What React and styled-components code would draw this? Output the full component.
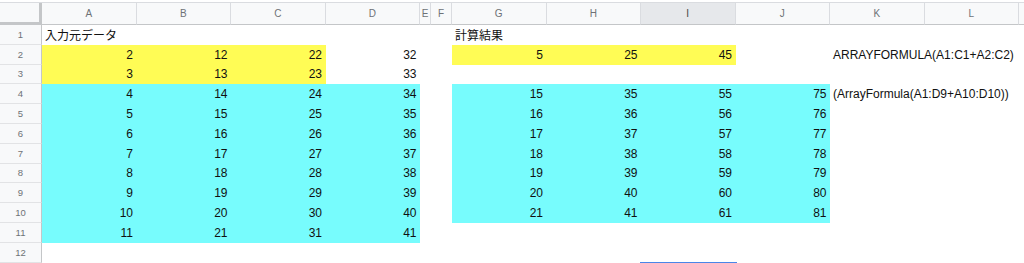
import React from 'react';
import styled, { createGlobalStyle } from 'styled-components';

const GlobalStyle = createGlobalStyle`
  html, body {
    margin: 0;
    padding: 0;
    background: #ffffff;
  }
`;

const Page = styled.div`
  width: 1024px;
  height: 263px;
  overflow: hidden;
  padding-top: 2px;
  box-sizing: border-box;
  font-family: "Liberation Sans", Arial, "Noto Sans CJK JP", sans-serif;
`;

const Sheet = styled.div`
  display: grid;
  grid-template-columns: 42px repeat(4, 94.5px) 11px 21px repeat(6, 94.5px) 1fr;
  grid-template-rows: 22px repeat(13, 19.8px);
  border-top: 1px solid #dadce0;
`;

const Corner = styled.div`
  background: #f8f9fa;
  border-right: 3px solid #c4c6c8;
  border-bottom: 3px solid #c4c6c8;
  box-sizing: border-box;
`;

const ColHeader = styled.div`
  display: flex;
  align-items: center;
  justify-content: center;
  background: ${(p) => (p.$active ? '#e6e8eb' : '#f8f9fa')};
  color: ${(p) => (p.$active ? '#444' : '#6e7276')};
  font-size: 10px;
  border-right: 1px solid #dadce0;
  border-bottom: 1px solid #c4c6c8;
  box-sizing: border-box;
`;

const RowHeader = styled.div`
  display: flex;
  align-items: center;
  justify-content: center;
  background: #f8f9fa;
  color: #6e7276;
  font-size: 9.5px;
  border-right: 1px solid #c4c6c8;
  border-bottom: 1px solid #e2e3e5;
  box-sizing: border-box;
`;

const Cell = styled.div`
  position: relative;
  display: flex;
  align-items: center;
  justify-content: ${(p) => (p.$align === 'left' ? 'flex-start' : 'flex-end')};
  padding: 0 3.5px 0 3px;
  background: ${(p) => p.$fill || 'transparent'};
  color: #111;
  font-size: 12px;
  white-space: nowrap;
  overflow: visible;
  min-width: 0;

  &::after {
    content: ${(p) => (p.$selected ? '""' : 'none')};
    position: absolute;
    left: -1px;
    right: -1px;
    top: -1px;
    bottom: -1px;
    border: 2px solid #4a86e8;
  }
`;

const YELLOW = '#fffc55';
const CYAN = '#77fcfd';

const COLS = ['A', 'B', 'C', 'D', 'E', 'F', 'G', 'H', 'I', 'J', 'K', 'L', ''];

// build the cell contents row by row
const cellAt = (row, col) => {
  if (row === 1) {
    if (col === 'A') return { text: '入力元データ', align: 'left' };
    if (col === 'G') return { text: '計算結果', align: 'left' };
  }
  if (row === 2 || row === 3) {
    const base = { A: 0, B: 10, C: 20, D: 30 };
    if (col in base) {
      return { text: String(row + base[col]), fill: col === 'D' ? null : YELLOW };
    }
    if (row === 2) {
      const calc = { G: '5', H: '25', I: '45' };
      if (col in calc) return { text: calc[col], fill: YELLOW };
      if (col === 'K') return { text: 'ARRAYFORMULA(A1:C1+A2:C2)', align: 'left' };
    }
  }
  if (row >= 4 && row <= 11) {
    const base = { A: 0, B: 10, C: 20, D: 30 };
    if (col in base) return { text: String(row + base[col]), fill: CYAN };
  }
  if (row >= 4 && row <= 10) {
    const calc = { G: 11, H: 31, I: 51, J: 71 };
    if (col in calc) return { text: String(row + calc[col]), fill: CYAN };
    if (row === 4 && col === 'K') return { text: '(ArrayFormula(A1:D9+A10:D10))', align: 'left' };
  }
  return null;
};

const ROWS = Array.from({ length: 12 }, (_, i) => i + 1);

export default function App() {
  return (
    <>
      <GlobalStyle />
      <Page>
        <Sheet>
          <Corner />
          {COLS.map((c, i) => (
            <ColHeader key={`h${i}`} $active={c === 'I'}>{c}</ColHeader>
          ))}
          {ROWS.map((r) => (
            <React.Fragment key={r}>
              <RowHeader>{r}</RowHeader>
              {COLS.map((c, i) => {
                const data = cellAt(r, c);
                return (
                  <Cell key={`${r}-${i}`} $fill={data && data.fill} $align={data && data.align}>
                    {data ? data.text : ''}
                  </Cell>
                );
              })}
            </React.Fragment>
          ))}
          {/* row 13, only its top edge is visible */}
          <RowHeader />
          {COLS.map((c, i) => (
            <Cell key={`13-${i}`} $selected={c === 'I'} />
          ))}
        </Sheet>
      </Page>
    </>
  );
}
